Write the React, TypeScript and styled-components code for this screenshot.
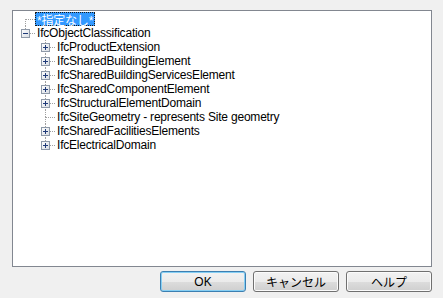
import styled, { createGlobalStyle } from "styled-components";

const GlobalStyle = createGlobalStyle`
  html, body {
    margin: 0;
    padding: 0;
    background: #f0f0f0;
  }
  * {
    box-sizing: border-box;
  }
`;

const Dialog = styled.div`
  width: 443px;
  height: 298px;
  padding: 10px 11px 0 12px;
  display: flex;
  flex-direction: column;
  font-family: "Liberation Sans", "Noto Sans CJK JP", sans-serif;
  font-size: 12px;
  color: #000;
`;

const TreeBox = styled.div`
  height: 257px;
  background: #fff;
  border: 1px solid #828790;
  padding: 1px 0 0 2px;
  overflow: hidden;
`;

const Row = styled.div`
  display: flex;
  align-items: center;
  height: 14px;
  white-space: nowrap;
`;

const Label = styled.span<{ $selected?: boolean }>`
  display: inline-flex;
  align-items: center;
  height: 14px;
  padding: 0 1px;
  letter-spacing: -0.2px;
  border: 1px ${(p) => (p.$selected ? "dotted #1a1a1a" : "solid transparent")};
  background: ${(p) => (p.$selected ? "#3399ff" : "transparent")};
  color: ${(p) => (p.$selected ? "#fff" : "#000")};
`;

const ButtonBar = styled.div`
  display: flex;
  justify-content: flex-end;
  gap: 7px;
  margin-top: 4px;
`;

const Button = styled.button<{ $default?: boolean }>`
  width: 86px;
  height: 21px;
  padding: 0;
  font-family: "Liberation Sans", "Noto Sans CJK JP", sans-serif;
  font-size: 12px;
  color: #000;
  border-radius: 3px;
  border: 1px solid ${(p) => (p.$default ? "#3c7fb1" : "#707070")};
  background: linear-gradient(#f2f2f2 0%, #ebebeb 50%, #dddddd 51%, #cfcfcf 100%);
  box-shadow: inset 0 0 0 1px ${(p) => (p.$default ? "#86cff4" : "#fbfbfb")};
`;

interface TreeNode {
  label: string;
  expandable?: boolean;
  open?: boolean;
  selected?: boolean;
  children?: TreeNode[];
}

const tree: TreeNode[] = [
  { label: "*指定なし*", selected: true },
  {
    label: "IfcObjectClassification",
    expandable: true,
    open: true,
    children: [
      { label: "IfcProductExtension", expandable: true },
      { label: "IfcSharedBuildingElement", expandable: true },
      { label: "IfcSharedBuildingServicesElement", expandable: true },
      { label: "IfcSharedComponentElement", expandable: true },
      { label: "IfcStructuralElementDomain", expandable: true },
      { label: "IfcSiteGeometry - represents Site geometry" },
      { label: "IfcSharedFacilitiesElements", expandable: true },
      { label: "IfcElectricalDomain", expandable: true },
    ],
  },
];

interface FlatRow {
  node: TreeNode;
  through: boolean[];
  up: boolean;
  down: boolean;
}

function flatten(nodes: TreeNode[], through: boolean[], out: FlatRow[]) {
  nodes.forEach((node, i) => {
    const isLast = i === nodes.length - 1;
    const up = !(through.length === 0 && i === 0);
    out.push({ node, through, up, down: !isLast });
    if (node.open && node.children) {
      flatten(node.children, [...through, !isLast], out);
    }
  });
  return out;
}

const DOT = "#a0a0a0";

function Gutter({
  up,
  down,
  horiz,
  box,
  open,
}: {
  up?: boolean;
  down?: boolean;
  horiz?: boolean;
  box?: boolean;
  open?: boolean;
}) {
  return (
    <svg width="20" height="14" viewBox="0 0 20 14" style={{ flex: "none" }}>
      <defs>
        <linearGradient id="bx" x1="0" y1="0" x2="1" y2="1">
          <stop offset="0" stopColor="#ffffff" />
          <stop offset="1" stopColor="#d6dbe2" />
        </linearGradient>
      </defs>
      {up && <line x1="10.5" y1="0" x2="10.5" y2="7.5" stroke={DOT} strokeDasharray="1 1" />}
      {down && <line x1="10.5" y1="7" x2="10.5" y2="14" stroke={DOT} strokeDasharray="1 1" />}
      {horiz && <line x1="11" y1="7.5" x2="20" y2="7.5" stroke={DOT} strokeDasharray="1 1" />}
      {box && (
        <g>
          <rect x="6.5" y="3.5" width="8" height="8" fill="url(#bx)" stroke="#8e99a8" />
          <line x1="8" y1="7.5" x2="13" y2="7.5" stroke="#1f3a78" />
          {!open && <line x1="10.5" y1="5" x2="10.5" y2="10" stroke="#1f3a78" />}
        </g>
      )}
    </svg>
  );
}

function App() {
  const rows = flatten(tree, [], []);

  return (
    <Dialog>
      <GlobalStyle />
      <TreeBox>
        {rows.map((r, idx) => (
          <Row key={idx}>
            {r.through.map((t, j) => (
              <Gutter key={j} up={t} down={t} />
            ))}
            <Gutter up={r.up} down={r.down} horiz box={r.node.expandable} open={r.node.open} />
            <Label $selected={r.node.selected}>{r.node.label}</Label>
          </Row>
        ))}
      </TreeBox>
      <ButtonBar>
        <Button $default>OK</Button>
        <Button>キャンセル</Button>
        <Button>ヘルプ</Button>
      </ButtonBar>
    </Dialog>
  );
}

export default App;
